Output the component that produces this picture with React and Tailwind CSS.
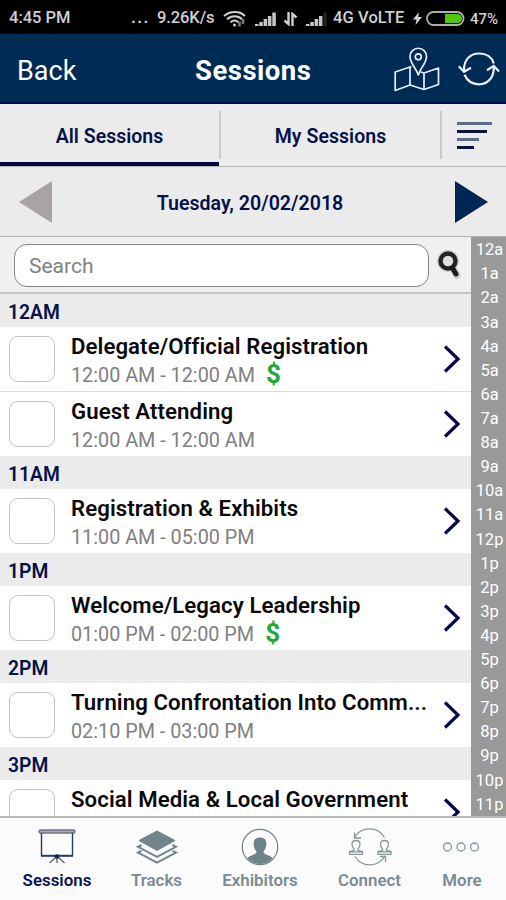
import React from "react";

const groups = [
  { hour: "12AM", rows: [
    { title: "Delegate/Official Registration", time: "12:00 AM - 12:00 AM", paid: true },
    { title: "Guest Attending", time: "12:00 AM - 12:00 AM" },
  ] },
  { hour: "11AM", rows: [{ title: "Registration & Exhibits", time: "11:00 AM - 05:00 PM" }] },
  { hour: "1PM", rows: [{ title: "Welcome/Legacy Leadership", time: "01:00 PM - 02:00 PM", paid: true }] },
  { hour: "2PM", rows: [{ title: "Turning Confrontation Into Comm...", time: "02:10 PM - 03:00 PM" }] },
  { hour: "3PM", rows: [{ title: "Social Media & Local Government", time: "" }] },
];

const hours = ["12a", "1a", "2a", "3a", "4a", "5a", "6a", "7a", "8a", "9a", "10a", "11a",
  "12p", "1p", "2p", "3p", "4p", "5p", "6p", "7p", "8p", "9p", "10p", "11p"];

function Signal({ full }) {
  return (
    <svg width="21" height="14" viewBox="0 0 21 14" fill="#c6c6c6" className="shrink-0">
      <rect x="0" y="12" width="3.500" height="2" />
      <rect x="4.300" y="10" width="3.500" height="4" />
      <rect x="8.600" y="7" width="3.500" height="7" />
      <rect x="12.900" y="4" width="3.500" height="10" />
      <rect x="17.300" y="0.500" width="3.500" height="13.500" fill={full ? "#c6c6c6" : "#222"} />
    </svg>
  );
}

function StatusBar() {
  return (
    <div className="flex h-[34px] shrink-0 items-center bg-black pt-[3px] text-[16.5px] font-medium text-[#d0d0d0]">
      <span className="ml-[9px] w-[122px] whitespace-nowrap">4:45 PM</span>
      <span className="w-[26px] font-bold tracking-[1.5px]">...</span>
      <span className="w-[66px] whitespace-nowrap tracking-[-0.100px]">9.26K/s</span>
      <svg width="24" height="18" viewBox="0 0 24 18" fill="none" stroke="#d0d0d0" strokeWidth="2" className="shrink-0">
        <path d="M1 6C7 .5 17 .5 22 6M4 9.2c4.500-4 11-4 15 0M7.500 12.300c2.500-2.200 5.500-2.200 8 0" />
        <circle cx="11.500" cy="15" r="1.500" fill="#d0d0d0" stroke="none" />
        <path d="M16.500 11.500v5M20 9v5" strokeWidth="2.600" stroke="#777" />
      </svg>
      <div className="ml-[8px]"><Signal full /></div>
      <svg width="15" height="14" viewBox="0 0 15 14" fill="none" stroke="#d0d0d0" strokeWidth="2.400" className="ml-[7px] shrink-0">
        <path d="M5.500 0v12L1.500 8.500M9.500 14V2L13.500 5.500" />
      </svg>
      <div className="ml-[8px]"><Signal /></div>
      <span className="ml-[6px] w-[80px] whitespace-nowrap tracking-[0.100px]">4G VoLTE</span>
      <svg width="9" height="13" viewBox="0 0 9 13" className="shrink-0"><path d="M6 0L0 7.500h3.500L2.500 13 9 5H5.200z" fill="#d0d0d0" /></svg>
      <svg width="39" height="15" viewBox="0 0 39 15" className="ml-[4px] shrink-0">
        <rect x="1" y="1" width="36.500" height="13" rx="6.500" fill="#000" stroke="#b0b0b0" strokeWidth="1.800" />
        <path d="M19 3h12.500a4.500 4.500 0 010 9H19z" fill="#4cc70a" />
      </svg>
      <span className="ml-[5px] pt-[1px] text-[15px]">47%</span>
    </div>
  );
}

function Header() {
  return (
    <div className="flex h-[70px] shrink-0 items-center border-b-2 border-[#05054a] bg-[#002b55] pt-[4px] text-white">
      <span className="ml-[17px] w-[178px] pt-[2px] text-[27px]">Back</span>
      <span className="w-[198px] pt-[2px] text-[27.500px] font-bold tracking-[0.500px]">Sessions</span>
      <svg width="47" height="46" viewBox="0 0 47 46" fill="none" stroke="#e8edff" strokeWidth="1.700" strokeLinejoin="round" className="shrink-0">
        <path d="M18.500 19.500L17 20 2.200 25v18.500L17 38l14 4.500 14.500-5V21L31 26l-3.500-1M17 20v18M31 26v16.500" />
        <path d="M25.300 28C22.500 20 17 16 17 9.500a8 8 0 0116.500 0c0 6.500-5.500 10.500-8.200 18.500z" />
        <circle cx="25.300" cy="9.800" r="3" />
      </svg>
      <svg width="42" height="36" viewBox="0 0 42 36" fill="none" stroke="#eef2ff" strokeWidth="2.200" className="ml-[18px] shrink-0">
        <path d="M6 19C5.500 8 12 1.500 21 1.500c7.500 0 13 4 14.800 10M35.800 15C36 26 29.500 32.300 21 32.300c-6.800 0-12-3.800-14.500-9.500" />
        <path d="M.8 14.200l5.200 5.600 7-4M29 18.200l6.800-4.300 5.200 5.600" />
      </svg>
    </div>
  );
}

function Tabs() {
  return (
    <div className="flex h-[63px] shrink-0 border-b border-[#b5b5b5] bg-[#ebebeb] text-[19.500px] font-semibold text-[#05124a]">
      <div className="flex w-[219px] items-center justify-center border-b-4 border-[#00033f] pt-[8px]">All Sessions</div>
      <div className="mt-[7px] h-[48px] w-[2px] bg-[#c9c9c9]" />
      <div className="flex w-[219px] items-center justify-center pt-[4px]">
        <span className="tracking-[0.050px]">My Sessions</span>
      </div>
      <div className="mt-[7px] h-[48px] w-[2px] bg-[#c9c9c9]" />
      <div className="ml-[15px] mt-[18px] flex flex-col gap-[5px]">
        <div className="h-[3px] w-[35px] bg-[#5d6d88]" />
        <div className="h-[3px] w-[30px] bg-[#0a1238]" />
        <div className="h-[3px] w-[22px] bg-[#5d6d88]" />
        <div className="h-[3px] w-[17px] bg-[#0a1238]" />
      </div>
    </div>
  );
}

function DateBar() {
  return (
    <div className="flex h-[70px] shrink-0 items-center justify-between border-b border-[#b3b3b3] bg-[#ebebeb] pl-[19px] pr-[18px] text-[19.600px] font-semibold text-[#05124a]">
      <svg width="33" height="42" viewBox="0 0 33 42"><path d="M0 21L33 0v42z" fill="#aaa3a5" /></svg>
      <span className="pr-[7px] pt-[5px]">Tuesday, 20/02/2018</span>
      <svg width="33" height="42" viewBox="0 0 33 42"><path d="M33 21L0 0v42z" fill="#002653" /></svg>
    </div>
  );
}

function SearchBar() {
  return (
    <div className="flex h-[57px] shrink-0 items-center border-b-2 border-[#c4c4c4] bg-[#f0f0f0] pl-[14px]">
      <div className="mt-[2px] flex h-[43px] w-[415px] items-center rounded-[13px] border border-[#858585] bg-white pl-[14px] pt-[2px] text-[21px] text-[#808080]">Search</div>
      <svg width="28" height="32" viewBox="0 0 28 32" fill="none" className="ml-[6px]">
        <g stroke="#cfcfcf" strokeWidth="7" strokeLinecap="round"><circle cx="13" cy="12" r="7.500" /><path d="M18 20l4 6.500" /></g>
        <circle cx="13" cy="12" r="7.500" stroke="#222" strokeWidth="4.400" fill="#dedede" />
        <path d="M17.500 19l3.500 6" stroke="#1c1c1c" strokeWidth="5" strokeLinecap="round" />
      </svg>
    </div>
  );
}

function Row({ row, first }) {
  return (
    <div className={first ? "flex h-[64px] shrink-0 bg-white" : "flex h-[65px] shrink-0 border-t border-[#dcdcdc] bg-white"}>
      <div className="ml-[9px] mt-[9px] h-[46px] w-[46px] shrink-0 rounded-[9px] border border-[#c3c3c3] bg-white" />
      <div className="ml-[16px] w-[372px] whitespace-nowrap">
        <div className="pt-[6px] text-[22.200px] font-semibold leading-[27px] tracking-[0.080px] text-[#0a0a0a]">{row.title}</div>
        <div className="flex h-[30px] items-center text-[19.800px] text-[#808080]">
          <span className="pt-[2px]">{row.time}</span>
          {row.paid && <span className="mb-[2px] ml-[11px] text-[26px] font-bold leading-[28px] text-[#22aa38]">$</span>}
        </div>
      </div>
      <svg width="18" height="28" viewBox="0 0 18 28" fill="none" stroke="#05094a" strokeWidth="3.200" className="mt-[18px] shrink-0">
        <path d="M2 1.500L15 14 2 26.500" />
      </svg>
    </div>
  );
}

const navIcons = {
  Sessions: (
    <g fill="none" stroke="#243a68" strokeWidth="1.400">
      <rect x="5" y="2" width="36" height="3" rx="1.500" fill="#aaa" stroke="#70748a" />
      <path d="M7.500 5v23M38.500 5v23" />
      <path d="M7 27.800h32" strokeWidth="2" />
      <path d="M23 29v6M21.500 29.500L15.500 35M24.500 29.500l6 5.500" stroke="#666" />
      <circle cx="23" cy="28.500" r="2.300" fill="#10245c" stroke="none" />
    </g>
  ),
  Tracks: (
    <g fill="none" stroke="#72858c" strokeWidth="2">
      <path d="M23 3l18 9.500-18 10-18-10z" fill="#72858c" strokeWidth="1" />
      <path d="M7.500 17L4 18.800 23 28.800l19-10-3.500-1.800M7.500 22.800L4 24.600 23 34.600l19-10-3.500-1.800" />
    </g>
  ),
  Exhibitors: (
    <g>
      <clipPath id="avatar"><circle cx="23" cy="19" r="17" /></clipPath>
      <circle cx="23" cy="19" r="17.700" fill="none" stroke="#72858c" strokeWidth="1.200" />
      <path clipPath="url(#avatar)" d="M23 9.500c5 0 6.800 2.800 6.300 7.500-.3 3-1.300 5-2.800 6.500 0 4 7.500 3 9.500 7.500L35 38H11l-1-7c2-4.500 9.500-3.500 9.500-7.500-1.500-1.500-2.500-3.500-2.800-6.500C16.200 12.300 18 9.500 23 9.500z" fill="#6e8289" />
    </g>
  ),
  Connect: (
    <g fill="none" stroke="#87969b" strokeWidth="1.300">
      <path d="M7.500 9.500C14-2 31-2 37.500 9.500M7.500 4.500v5.500h6.500M8 28.500c7 11.500 23 11 30-.5M33 28.500h5.500V34" />
      <path d="M9 12.500c3 0 4 1.500 4 3.800 0 2-.8 3.500-2 4.500v1.500l4.500 1.200v2.800H2.500v-2.800L7 22.300v-1.500c-1.200-1-2-2.500-2-4.500 0-2.300 1-3.800 4-3.800zM2.500 23.800h13" />
      <path d="M37.500 12.500c3 0 4 1.500 4 3.800 0 2-.8 3.500-2 4.500v1.500l4.500 1.200v2.800H31v-2.800l4.500-1.200v-1.500c-1.200-1-2-2.500-2-4.500 0-2.300 1-3.800 4-3.800zM31 23.800h13" />
    </g>
  ),
  More: (
    <g fill="none" stroke="#87969b" strokeWidth="1.300">
      <circle cx="8.500" cy="19" r="4" /><circle cx="22" cy="19" r="4" /><circle cx="35.500" cy="19" r="4" />
    </g>
  ),
};

const navItems = [
  { name: "Sessions", box: "w-[114px] text-[#0a1450]" },
  { name: "Tracks", box: "w-[85px] text-[#7c8b91]" },
  { name: "Exhibitors", box: "w-[122px] text-[#7c8b91]" },
  { name: "Connect", box: "w-[97px] text-[#7c8b91]" },
  { name: "More", box: "w-[88px] text-[#7c8b91]" },
];

export default function App() {
  return (
    <div className="flex h-[900px] w-[506px] flex-col overflow-hidden bg-white font-['Roboto',sans-serif]">
      <StatusBar />
      <Header />
      <Tabs />
      <DateBar />
      <div className="flex h-[579px] shrink-0 overflow-hidden">
        <div className="flex w-[471px] flex-col overflow-hidden">
          <SearchBar />
          {groups.map((g) => (
            <React.Fragment key={g.hour}>
              <div className="flex h-[33px] shrink-0 items-center bg-[#ebebeb] pl-[8px] pt-[5px] text-[19.300px] font-semibold text-[#05124a]">{g.hour}</div>
              {g.rows.map((r, i) => <Row key={r.title} row={r} first={i === 0} />)}
            </React.Fragment>
          ))}
        </div>
        <div className="flex w-[35px] flex-col items-center bg-[#999999] pl-[2px] text-[16.500px] text-white">
          {hours.map((h) => <div key={h} className="flex h-[24.120px] shrink-0 items-center pt-[3px]">{h}</div>)}
        </div>
      </div>
      <div className="flex h-[84px] shrink-0 border-t-2 border-[#b9b9b9] bg-[#fbfbfc]">
        {navItems.map((n) => (
          <div key={n.name} className={`flex flex-col items-center pt-[10px] text-[16.900px] font-semibold ${n.box}`}>
            <svg width="46" height="38" viewBox="0 0 46 38" className="shrink-0">{navIcons[n.name]}</svg>
            <span className="mt-[2px]">{n.name}</span>
          </div>
        ))}
      </div>
    </div>
  );
}
